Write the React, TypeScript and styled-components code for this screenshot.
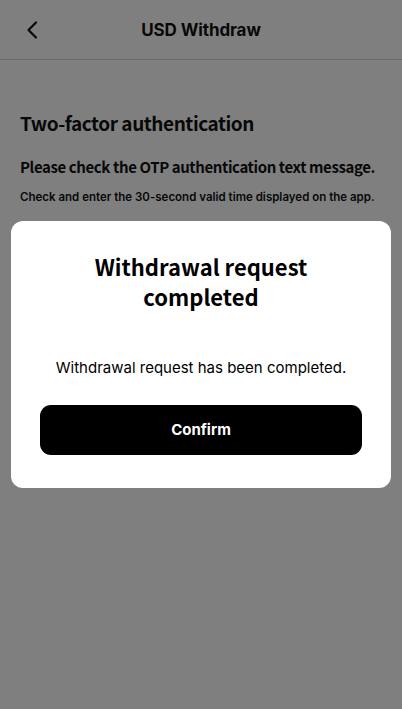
import styled, { createGlobalStyle } from 'styled-components';

const GlobalStyle = createGlobalStyle`
  html, body {
    margin: 0;
    padding: 0;
    background: #ffffff;
  }
  * {
    box-sizing: border-box;
  }
`;

const Page = styled.div`
  position: relative;
  width: 402px;
  height: 709px;
  background: #ffffff;
  overflow: hidden;
  font-family: Inter, "Liberation Sans", sans-serif;
  color: #111;
`;

const Header = styled.header`
  position: relative;
  height: 60px;
  display: flex;
  align-items: center;
  justify-content: center;
  border-bottom: 1px solid #d6d6d6;
`;

const BackButton = styled.button`
  position: absolute;
  left: 20px;
  top: 18px;
  width: 24px;
  height: 24px;
  padding: 0;
  border: none;
  background: none;
  display: flex;
  align-items: center;
  justify-content: center;
`;

const HeaderTitle = styled.h1`
  margin: 0;
  font-size: 17px;
  font-weight: 700;
  letter-spacing: -0.1px;
`;

const Content = styled.main`
  padding: 50px 20px 0;
  display: flex;
  flex-direction: column;
`;

const SectionTitle = styled.h2`
  margin: 0;
  font-family: "Noto Sans CJK KR", "Noto Sans", sans-serif;
  font-size: 19px;
  font-weight: 700;
  letter-spacing: -0.45px;
  line-height: 26px;
`;

const Lead = styled.p`
  margin: 21px 0 0;
  font-family: "Noto Sans CJK KR", "Noto Sans", sans-serif;
  font-size: 15px;
  font-weight: 700;
  letter-spacing: -0.4px;
  line-height: 20px;
  white-space: nowrap;
`;

const Hint = styled.p`
  margin: 12px 0 0;
  font-size: 11.5px;
  font-weight: 600;
  line-height: 16px;
  white-space: nowrap;
`;

const Overlay = styled.div`
  position: absolute;
  inset: 0;
  background: rgba(0, 0, 0, 0.5);
  display: flex;
  justify-content: center;
  padding-top: 221px;
`;

const Modal = styled.div`
  width: 380px;
  height: 267px;
  background: #ffffff;
  border-radius: 12px;
  padding: 30px 29px 0;
  display: flex;
  flex-direction: column;
  align-items: center;
`;

const ModalTitle = styled.h3`
  margin: 0;
  font-family: "Noto Sans CJK KR", "Noto Sans", sans-serif;
  font-size: 22px;
  font-weight: 700;
  line-height: 30px;
  text-align: center;
  color: #000;
  width: 240px;
`;

const ModalText = styled.p`
  margin: 47px 0 0;
  font-size: 15px;
  line-height: 20px;
  color: #000;
  text-align: center;
`;

const ConfirmButton = styled.button`
  margin-top: 27px;
  width: 322px;
  height: 50px;
  border: none;
  border-radius: 11px;
  background: #000;
  color: #fff;
  font-family: Inter, "Liberation Sans", sans-serif;
  font-size: 15px;
  font-weight: 700;
  padding-bottom: 2px;
`;

const App = () => {
  return (
    <>
      <GlobalStyle />
      <Page>
        <Header>
          <BackButton aria-label="Back">
            <svg width="24" height="24" viewBox="0 0 24 24" fill="none">
              <path d="M16 4.5L8.5 12L16 19.5" stroke="#111" strokeWidth="2.2" strokeLinecap="round" strokeLinejoin="round" />
            </svg>
          </BackButton>
          <HeaderTitle>USD Withdraw</HeaderTitle>
        </Header>
        <Content>
          <SectionTitle>Two-factor authentication</SectionTitle>
          <Lead>Please check the OTP authentication text message.</Lead>
          <Hint>Check and enter the 30-second valid time displayed on the app.</Hint>
        </Content>
        <Overlay>
          <Modal>
            <ModalTitle>Withdrawal request completed</ModalTitle>
            <ModalText>Withdrawal request has been completed.</ModalText>
            <ConfirmButton>Confirm</ConfirmButton>
          </Modal>
        </Overlay>
      </Page>
    </>
  );
};

export default App;
